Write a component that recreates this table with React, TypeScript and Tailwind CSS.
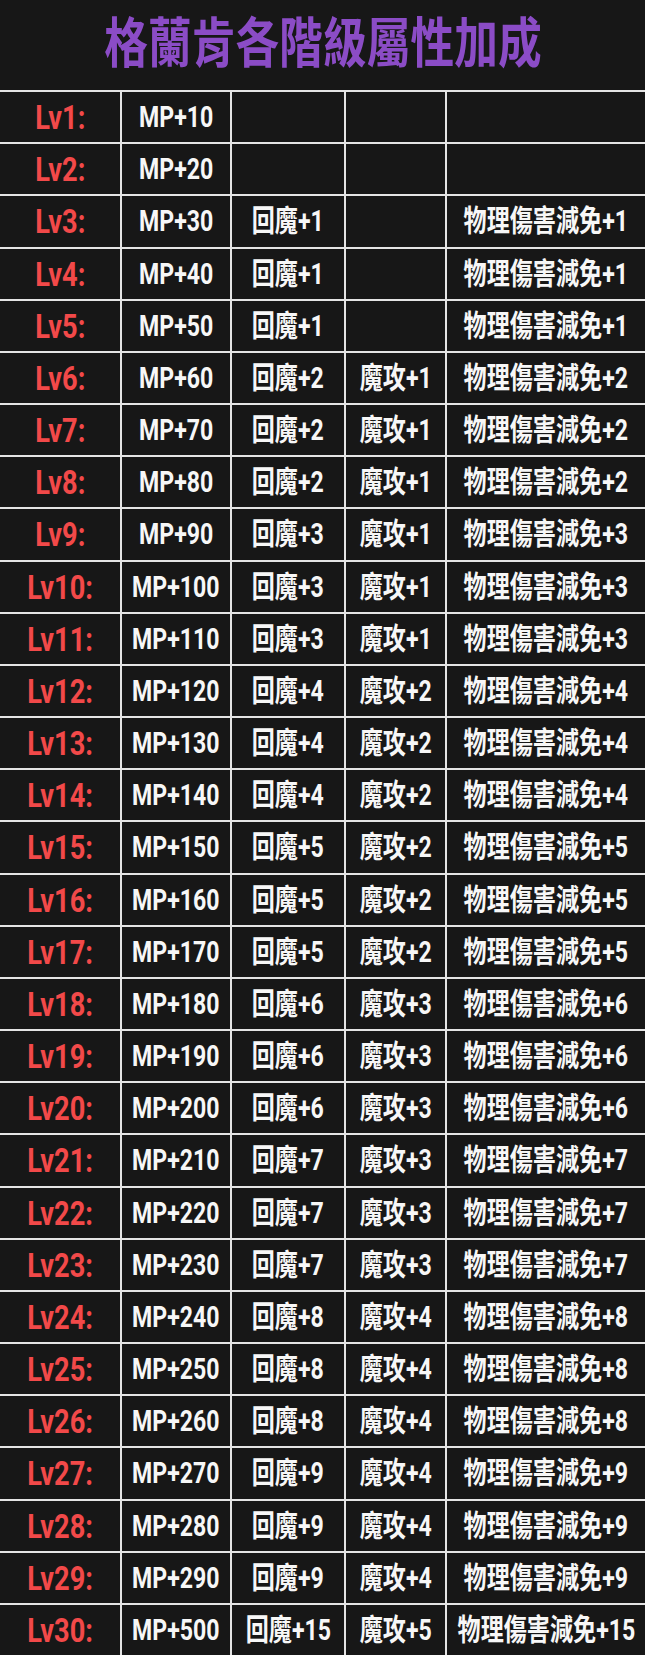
import React from "react";

// Attribute bonus table for 格蘭肯, Lv1–Lv30.
type Row = { lv: string; mp: string; regen: string; matk: string; dr: string };

function tier(n: number) {
  // 回魔 / 物理傷害減免 step every 3 levels from Lv3, Lv30 jumps to 15
  if (n < 3) return 0;
  if (n === 30) return 15;
  return Math.floor(n / 3);
}

function matkTier(n: number) {
  if (n < 6) return 0;
  if (n === 30) return 5;
  return Math.floor(n / 6);
}

const rows: Row[] = Array.from({ length: 30 }, (_, i) => {
  const n = i + 1;
  const t = tier(n);
  const m = matkTier(n);
  return {
    lv: `Lv${n}:`,
    mp: `MP+${n === 30 ? 500 : n * 10}`,
    regen: t ? `回魔+${t}` : "",
    matk: m ? `魔攻+${m}` : "",
    dr: t ? `物理傷害減免+${t}` : "",
  };
});

const font = {
  fontFamily: "Roboto, 'Noto Sans CJK TC', sans-serif",
};

function Cell({ text, red }: { text: string; red?: boolean }) {
  return (
    <div className="flex items-center justify-center bg-[#171717] overflow-hidden">
      {text && (
        <span
          className={`inline-block whitespace-nowrap font-bold leading-none ${
            red
              ? "text-[34px] scale-x-[0.8] text-[#f24949]"
              : "text-[30px] scale-x-[0.77] text-[#f7f7f7]"
          }`}
          style={font}
        >
          {text}
        </span>
      )}
    </div>
  );
}

export default function App() {
  return (
    <div className="bg-white w-[648px] h-[1658px]">
      <div className="grid w-[645px] h-[1655px] gap-[2px] bg-[#e4e4e4] grid-cols-[120px_108px_112px_99px_198px] grid-rows-[90px_repeat(30,1fr)]">
        <div className="col-span-5 flex items-center justify-center bg-[#171717]">
          <span
            className="inline-block whitespace-nowrap text-[54px] font-bold leading-none text-[#8b4cc6] scale-x-[0.81]"
            style={font}
          >
            格蘭肯各階級屬性加成
          </span>
        </div>
        {rows.map((r) => (
          <React.Fragment key={r.lv}>
            <Cell text={r.lv} red />
            <Cell text={r.mp} />
            <Cell text={r.regen} />
            <Cell text={r.matk} />
            <Cell text={r.dr} />
          </React.Fragment>
        ))}
      </div>
    </div>
  );
}
